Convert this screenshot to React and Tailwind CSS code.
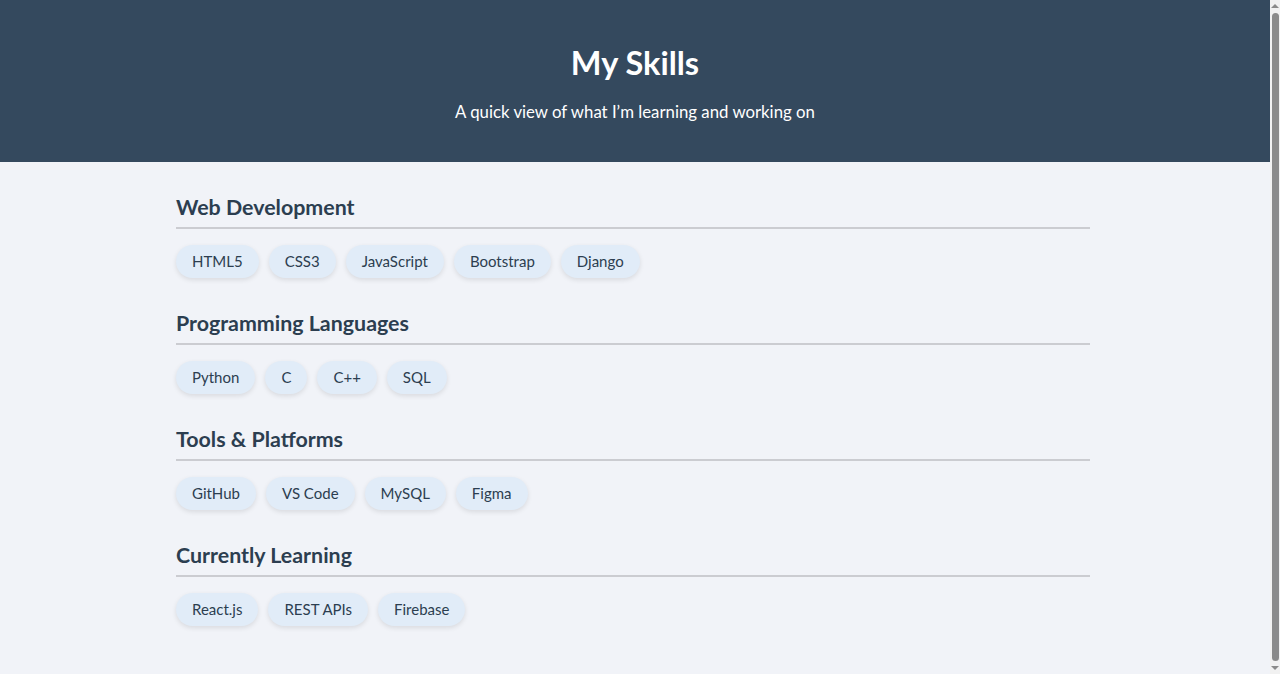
const sections = [
  { title: "Web Development", skills: ["HTML5", "CSS3", "JavaScript", "Bootstrap", "Django"] },
  { title: "Programming Languages", skills: ["Python", "C", "C++", "SQL"] },
  { title: "Tools & Platforms", skills: ["GitHub", "VS Code", "MySQL", "Figma"] },
  { title: "Currently Learning", skills: ["React.js", "REST APIs", "Firebase"] },
];

function SkillSection({ title, skills }) {
  return (
    <section className="mb-[33px]">
      <h2 className="border-b-2 border-[#cbccd1] pb-[8px] text-[21.4px] leading-[24px] font-bold text-[#2c3e50]">
        {title}
      </h2>
      <div className="mt-4 flex flex-wrap gap-[10px]">
        {skills.map((s) => (
          <span
            key={s}
            className="rounded-full bg-[#e1ecf8] px-4 py-[8px] text-[15px] leading-[17px] text-[#2c3e50] shadow-[0_2px_5px_rgba(0,0,0,0.1)]"
          >
            {s}
          </span>
        ))}
      </div>
    </section>
  );
}

// fake window scrollbar, as in the screenshot
function ScrollBar() {
  return (
    <div className="flex h-screen w-[10px] shrink-0 flex-col items-center bg-[#f1f1f1]">
      <div className="mt-[4px] h-0 w-0 border-x-[4px] border-b-[4px] border-x-transparent border-b-[#8a8a8a]" />
      <div className="mt-[5px] w-[7px] flex-1 rounded-[4px] bg-[#8a8a8a]" />
      <div className="mt-[5px] mb-[4px] h-0 w-0 border-x-[4px] border-t-[4px] border-x-transparent border-t-[#8a8a8a]" />
    </div>
  );
}

export default function App() {
  return (
    <div
      className="flex h-screen overflow-hidden bg-[#f1f3f8]"
      style={{ fontFamily: '"Trebuchet MS", Lato, sans-serif' }}
    >
      <div className="min-w-0 flex-1">
        <header className="bg-[#34495e] pt-[43px] pb-[38px] text-center text-white">
          <h1 className="text-[32.5px] leading-[40px] font-bold">My Skills</h1>
          <p className="mt-[17px] text-[16.8px] leading-[24px]">
            A quick view of what I’m learning and working on
          </p>
        </header>
        <main className="mx-auto max-w-[918px] pt-[33px] pr-[4px] pb-[40px]">
          {sections.map((sec) => (
            <SkillSection key={sec.title} {...sec} />
          ))}
        </main>
      </div>
      <ScrollBar />
    </div>
  );
}
